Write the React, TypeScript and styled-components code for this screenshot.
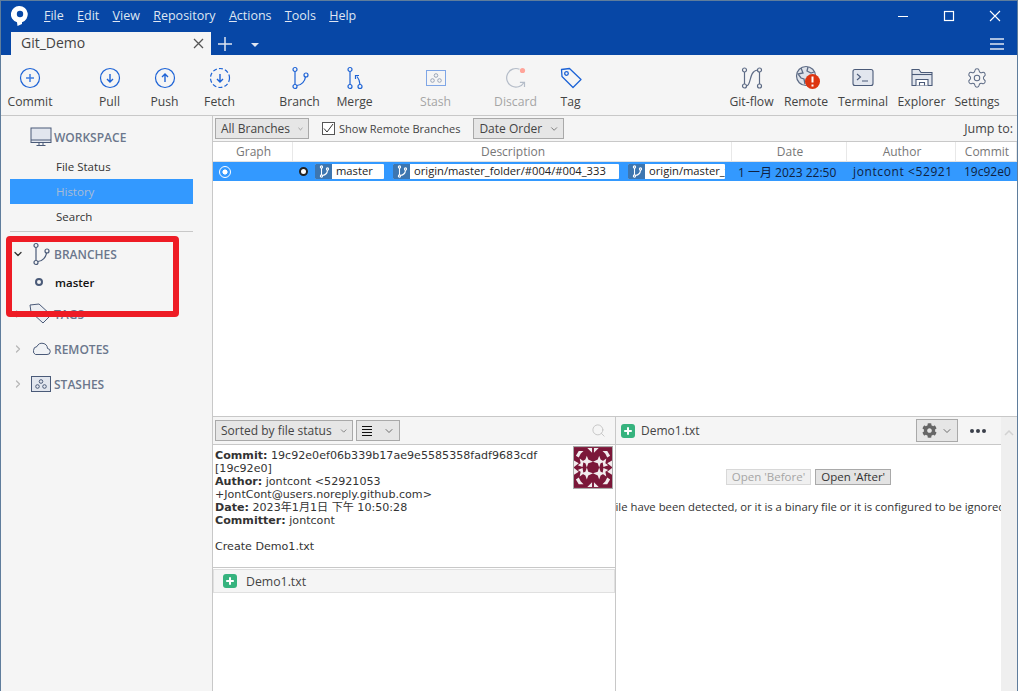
import React from "react";
import styled, { createGlobalStyle } from "styled-components";
import { ChevronDown, ChevronRight, Search, Settings } from "lucide-react";
import { FaCog } from "react-icons/fa";

const UI_FONT = `"Open Sans", "Noto Sans CJK TC", sans-serif`;

const GlobalStyle = createGlobalStyle`
  html, body {
    margin: 0;
    padding: 0;
    overflow: hidden;
    background: #f5f5f5;
  }
  * { box-sizing: border-box; }
`;

const BLUE = "#1d63d6";
const SLATE = "#4a5a78";

const CommitIcon = () => (
  <svg width="22" height="22" viewBox="0 0 22 22" fill="none" stroke={BLUE} strokeWidth="1.2">
    <circle cx="11" cy="11" r="9.5" />
    <path d="M11 7v8M7 11h8" stroke="#3f7de0" strokeWidth="1.5" />
  </svg>
);
const PullIcon = () => (
  <svg width="22" height="22" viewBox="0 0 22 22" fill="none" stroke={BLUE} strokeWidth="1.2">
    <circle cx="11" cy="11" r="9.5" />
    <path d="M11 7v8M8 12l3 3 3-3" strokeWidth="1.4" />
  </svg>
);
const PushIcon = () => (
  <svg width="22" height="22" viewBox="0 0 22 22" fill="none" stroke={BLUE} strokeWidth="1.2">
    <circle cx="11" cy="11" r="9.5" />
    <path d="M11 15V7M8 10l3-3 3 3" strokeWidth="1.4" />
  </svg>
);
const FetchIcon = () => (
  <svg width="22" height="22" viewBox="0 0 22 22" fill="none" stroke={BLUE} strokeWidth="1.2">
    <circle cx="11" cy="11" r="9.5" strokeDasharray="4 2.2" />
    <path d="M11 7v8M8 12l3 3 3-3" strokeWidth="1.4" />
  </svg>
);
const BranchIcon = ({ color = BLUE }: { color?: string }) => (
  <svg width="22" height="24" viewBox="0 0 22 24" fill="none" stroke={color} strokeWidth="1.2">
    <circle cx="6" cy="3.5" r="2" />
    <circle cx="6" cy="20.5" r="2" />
    <circle cx="17" cy="9" r="2" />
    <path d="M6 5.5v13M7.8 19.5c5 -0.5 8.2 -4.5 8.7 -8.6" />
  </svg>
);
const MergeIcon = () => (
  <svg width="22" height="24" viewBox="0 0 22 24" fill="none" stroke={BLUE} strokeWidth="1.2">
    <circle cx="6" cy="3.5" r="2" />
    <circle cx="6" cy="20.5" r="2" />
    <circle cx="16" cy="20.5" r="2" />
    <path d="M6 5.5v13M16 18.5c0 -3 -1 -5.5 -3 -8M11.5 13v-3.5h3.5" />
  </svg>
);
const StashIcon = () => (
  <svg width="22" height="18" viewBox="0 0 22 18" fill="none" stroke="#7fa6e6" strokeWidth="1">
    <rect x="1.5" y="1.5" width="19" height="15" />
    <circle cx="11" cy="6.5" r="1.8" stroke="#9aa5b8" />
    <circle cx="7.5" cy="11.5" r="1.8" stroke="#9aa5b8" />
    <circle cx="14.5" cy="11.5" r="1.8" stroke="#9aa5b8" />
  </svg>
);
const DiscardIcon = () => (
  <svg width="24" height="24" viewBox="0 0 24 24" fill="none" stroke="#b4bcc8" strokeWidth="1.2">
    <path d="M15.5 3.2A9.3 9.3 0 1 0 20 16.5" />
    <path d="M20.5 21v-4.6h-4.6" />
    <circle cx="18.5" cy="4.5" r="2.6" fill="#ffa49a" stroke="none" />
  </svg>
);
const TagIcon = () => (
  <svg width="22" height="22" viewBox="0 0 22 22" fill="none" stroke={BLUE} strokeWidth="1.3">
    <path d="M1.5 2.5L9.5 1.5L21 12.5L13 20.5L2 9.5Z" strokeLinejoin="round" />
    <circle cx="6.5" cy="6.5" r="1.8" />
  </svg>
);
const FlowIcon = () => (
  <svg width="22" height="22" viewBox="0 0 22 22" fill="none" stroke="#5d6b85" strokeWidth="1.2">
    <circle cx="3.5" cy="3" r="2" />
    <circle cx="3.5" cy="19" r="2" />
    <circle cx="18.5" cy="3" r="2" />
    <circle cx="18.5" cy="19" r="2" />
    <path d="M3.5 5v12M18.5 5v12M5.5 19c5 0 2-15 11-16" />
  </svg>
);
const RemoteIcon = () => (
  <svg width="28" height="26" viewBox="-3 0 28 26" fill="none">
    <circle cx="11" cy="11" r="9.5" fill="#dfe3ea" stroke="#5d6b85" strokeWidth="1.2" />
    <path d="M6 3l2 5-5 1 3 4 3 1 1 5M13 2l-1 4 4 2 3-1M15 12l3 2-2 4" stroke="#5d6b85" strokeWidth="1.3" />
    <circle cx="17.5" cy="16.5" r="7.5" fill="#dd3511" />
    <path d="M17.5 11.5v6M17.5 19.5v2" stroke="#fff" strokeWidth="2" />
  </svg>
);
const TerminalIcon = () => (
  <svg width="22" height="20" viewBox="0 0 22 20" fill="none" stroke="#4a5a78" strokeWidth="1.1">
    <rect x="1" y="1.5" width="20" height="16" rx="2" fill="#e2e6ee" />
    <path d="M5 6l3.5 3L5 12M10 13h6" />
  </svg>
);
const ExplorerIcon = () => (
  <svg width="22" height="20" viewBox="0 0 22 20" fill="none" stroke="#4a5a78" strokeWidth="1.1">
    <path d="M1 17.5V1.5h7l2 3h11v13z" fill="#e2e6ee" />
    <path d="M1 6.5h20" />
    <path d="M5 17.5v-6h12v6M8.5 17.5v-3h5v3" fill="#fff" />
  </svg>
);
const MonitorIcon = () => (
  <svg width="22" height="21" viewBox="0 0 22 21" fill="none" stroke={SLATE} strokeWidth="1">
    <rect x="1" y="1" width="20" height="14.5" fill="#e2e6ee" />
    <path d="M1 13h20M9 15.5v2.5M13 15.5v2.5M6.5 18.5h9" />
  </svg>
);
const CloudIcon = () => (
  <svg width="20" height="14" viewBox="0 0 20 14" fill="none" stroke={SLATE} strokeWidth="1">
    <path d="M4.5 12.5h11.5a3 3 0 0 0 .5-6A5.5 5.5 0 0 0 6 4.5a4 4 0 0 0-3.5 4 3.5 3.5 0 0 0 2 4z" fill="#f0f2f5" />
  </svg>
);
const StashBoxIcon = () => (
  <svg width="20" height="17" viewBox="0 0 20 17" fill="none" stroke={SLATE} strokeWidth="1">
    <rect x="0.5" y="0.5" width="19" height="15" fill="#e2e6ee" />
    <circle cx="10" cy="5.5" r="1.8" />
    <circle cx="6.5" cy="10.5" r="1.8" />
    <circle cx="13.5" cy="10.5" r="1.8" />
  </svg>
);
const SideTagIcon = () => (
  <svg width="23" height="22" viewBox="0 0 23 22" fill="none" stroke={SLATE} strokeWidth="1">
    <path d="M1 2l9-1 12 11-8 8L2 9z" fill="#eceef2" />
  </svg>
);
const RefGlyph = () => (
  <svg width="12" height="13" viewBox="0 0 12 13" fill="none" stroke="#fff" strokeWidth="1.1">
    <circle cx="3.5" cy="2" r="1.1" />
    <circle cx="3.5" cy="11" r="1.1" />
    <circle cx="9.5" cy="4" r="1.1" />
    <path d="M3.5 3v7M4.500 10.500c3-.5 4.800-2.500 5-5.400" />
  </svg>
);
const PlusBadge = () => (
  <svg width="14" height="14" viewBox="0 0 14 14">
    <rect width="14" height="14" rx="3" fill="#36b37e" />
    <path d="M7 3.2v7.6M3.2 7h7.6" stroke="#fff" strokeWidth="2" />
  </svg>
);
const ListIcon = () => (
  <svg width="10" height="10" viewBox="0 0 10 10" stroke="#111" strokeWidth="1">
    <path d="M0 .5h10M0 3.5h10M0 6.5h10M0 9.5h10" />
  </svg>
);

// one corner of the avatar, mirrored into the other three
const Quadrant = () => (
  <>
    <path d="M2 8l3-5 5 0-3 3-2 4zM14 0h5v5zM0 13l5 3-5 4z" />
    <path d="M10 14l-4-3 1 5-3 2 5 2z" />
    <path d="M13.500 8l1.500 4 5 2.500-5 1.500-1.500 4.500-1.500-4.500-4-1.500 4-2.500z" />
  </>
);
const Identicon = () => (
  <svg width="38" height="41" viewBox="0 0 40 43" style={{ display: "block" }}>
    <rect width="40" height="43" fill="#7b1739" />
    <g fill="#f2ecee">
      <g transform="translate(0 1)"><Quadrant /></g>
      <g transform="translate(40 1) scale(-1 1)"><Quadrant /></g>
      <g transform="translate(0 42) scale(1 -1)"><Quadrant /></g>
      <g transform="translate(40 42) scale(-1 -1)"><Quadrant /></g>
    </g>
  </svg>
);

const Chevron = () => <ChevronDown size={12} strokeWidth={1.5} color="#444" />;

export default function App() {
  return (
    <Window>
      <GlobalStyle />
      <TitleBar>
        <MenuRow>
          <Logo>
            <svg width="17" height="20" viewBox="0 0 17 20">
              <path d="M8.500 0a8.300 8.300 0 0 1 2.500 16.200V18l-4.500 2L6 16.300A8.300 8.300 0 0 1 8.500 0z" fill="#fff" />
              <circle cx="9" cy="8" r="3.200" fill="#0747a6" />
            </svg>
          </Logo>
          <Menu>
            {[["F", "ile"], ["E", "dit"], ["V", "iew"], ["R", "epository"], ["A", "ctions"], ["T", "ools"], ["H", "elp"]].map(([k, rest]) => (
              <MenuItem key={k}>
                <u>{k}</u>
                {rest}
              </MenuItem>
            ))}
          </Menu>
          <WinControls>
            <svg width="12" height="12" viewBox="0 0 12 12" stroke="#fff" strokeWidth="1">
              <path d="M1 6.500h10" />
            </svg>
            <svg width="12" height="12" viewBox="0 0 12 12" stroke="#fff" strokeWidth="1.200" fill="none">
              <rect x="1.500" y="1.500" width="9" height="9" />
            </svg>
            <svg width="12" height="12" viewBox="0 0 12 12" stroke="#fff" strokeWidth="1.100">
              <path d="M1 1l10 10M11 1L1 11" />
            </svg>
          </WinControls>
        </MenuRow>
        <TabRow>
          <Tab>
            <TabName>Git_Demo</TabName>
            <svg width="11" height="11" viewBox="0 0 11 11" stroke="#555" strokeWidth="1.300">
              <path d="M1 1l9 9M10 1l-9 9" />
            </svg>
          </Tab>
          <NewTab>
            <svg width="14" height="14" viewBox="0 0 14 14" stroke="#dfe6f2" strokeWidth="1.500">
              <path d="M7 0v14M0 7h14" />
            </svg>
          </NewTab>
          <Caret />
          <Burger>
            <i />
            <i />
            <i />
          </Burger>
        </TabRow>
      </TitleBar>

      <Toolbar>
        <Tool $w={58}><IconSlot><CommitIcon /></IconSlot>Commit</Tool>
        <Tool $off={23}><IconSlot><PullIcon /></IconSlot>Pull</Tool>
        <Tool><IconSlot><PushIcon /></IconSlot>Push</Tool>
        <Tool><IconSlot><FetchIcon /></IconSlot>Fetch</Tool>
        <Tool $off={25}><IconSlot><BranchIcon /></IconSlot>Branch</Tool>
        <Tool><IconSlot><MergeIcon /></IconSlot>Merge</Tool>
        <Tool $off={26} $disabled><IconSlot><StashIcon /></IconSlot>Stash</Tool>
        <Tool $off={25} $disabled><IconSlot><DiscardIcon /></IconSlot>Discard</Tool>
        <Tool><IconSlot><TagIcon /></IconSlot>Tag</Tool>
        <ToolSpacer />
        <Tool $w={57}><IconSlot><FlowIcon /></IconSlot>Git-flow</Tool>
        <Tool $w={52}><IconSlot><RemoteIcon /></IconSlot>Remote</Tool>
        <Tool $w={62}><IconSlot><TerminalIcon /></IconSlot>Terminal</Tool>
        <Tool $w={55}><IconSlot><ExplorerIcon /></IconSlot>Explorer</Tool>
        <Tool $w={56}><IconSlot><Settings size={22} strokeWidth={1.1} color="#5d6b85" /></IconSlot>Settings</Tool>
      </Toolbar>

      <Body>
        <Sidebar>
          <WorkspaceHead>
            <MonitorIcon />
            <SectionLabel>WORKSPACE</SectionLabel>
          </WorkspaceHead>
          <NavItem>File Status</NavItem>
          <NavItem $active>History</NavItem>
          <NavItem>Search</NavItem>
          <Divider />
          <SectionHead $top={10}>
            <ChevronDown size={12} strokeWidth={2.6} color="#333" />
            <SectionIcon><BranchIcon color={SLATE} /></SectionIcon>
            <SectionLabel>BRANCHES</SectionLabel>
          </SectionHead>
          <BranchRow>
            <BranchDot />
            master
          </BranchRow>
          <SectionHead $top={8}>
            <ChevronRight size={12} strokeWidth={2.4} color="#b5b5b5" />
            <SectionIcon><SideTagIcon /></SectionIcon>
            <SectionLabel>TAGS</SectionLabel>
          </SectionHead>
          <SectionHead $top={11}>
            <ChevronRight size={12} strokeWidth={2.4} color="#b5b5b5" />
            <SectionIcon><CloudIcon /></SectionIcon>
            <SectionLabel>REMOTES</SectionLabel>
          </SectionHead>
          <SectionHead $top={11}>
            <ChevronRight size={12} strokeWidth={2.4} color="#b5b5b5" />
            <SectionIcon><StashBoxIcon /></SectionIcon>
            <SectionLabel>STASHES</SectionLabel>
          </SectionHead>
          <Highlight />
        </Sidebar>

        <Main>
          <FilterBar>
            <Select $w={94}>All Branches<Chevron /></Select>
            <CheckLabel>
              <CheckBox>
                <svg width="11" height="11" viewBox="0 0 11 11" fill="none" stroke="#333" strokeWidth="1">
                  <path d="M1 5.500l3 3.500 6-8" />
                </svg>
              </CheckBox>
              Show Remote Branches
            </CheckLabel>
            <Select $w={91}>Date Order<Chevron /></Select>
            <JumpTo>Jump to:</JumpTo>
          </FilterBar>
          <Columns>
            <span>Graph</span>
            <span>Description</span>
            <span>Date</span>
            <span>Author</span>
            <span>Commit</span>
          </Columns>
          <LogArea>
            <LogRow>
              <GraphCell><GraphNode /></GraphCell>
              <DescCell>
                <HeadDot />
                <Ref $w={69}><RefIcon><RefGlyph /></RefIcon><RefName>master</RefName></Ref>
                <Ref $w={226}><RefIcon><RefGlyph /></RefIcon><RefName>origin/master_folder/#004/#004_333</RefName></Ref>
                <Ref $w={97}><RefIcon><RefGlyph /></RefIcon><RefName>origin/master_f</RefName></Ref>
              </DescCell>
              <LogCell>1 一月 2023 22:50</LogCell>
              <LogCell $spread>jontcont &lt;52921</LogCell>
              <LogCell $pad={8}>19c92e0</LogCell>
            </LogRow>
          </LogArea>
          <Bottom>
            <LeftPane>
              <PaneBar>
                <Select $w={138}>Sorted by file status<Chevron /></Select>
                <Select $w={44}><ListIcon /><Chevron /></Select>
                <SearchSlot><Search size={15} strokeWidth={1.5} color="#c4c4c4" /></SearchSlot>
              </PaneBar>
              <Details>
                <Avatar><Identicon /></Avatar>
                <b>Commit:</b> 19c92e0ef06b339b17ae9e5585358fadf9683cdf<br />
                [19c92e0]<br />
                <b>Author:</b> jontcont &lt;52921053<br />
                +JontCont@users.noreply.github.com&gt;<br />
                <b>Date:</b> 2023年1月1日 下午 10:50:28<br />
                <b>Committer:</b> jontcont<br />
                <br />
                Create Demo1.txt
              </Details>
              <FileList>
                <FileRow>
                  <PlusBadge />
                  Demo1.txt
                </FileRow>
              </FileList>
            </LeftPane>
            <RightPane>
              <DiffContent>
                <DiffBar>
                  <PlusBadge />
                  <DiffName>Demo1.txt</DiffName>
                  <GearButton>
                    <FaCog size={15} color="#666" />
                    <Chevron />
                  </GearButton>
                  <Dots>
                    <i />
                    <i />
                    <i />
                  </Dots>
                </DiffBar>
                <DiffBody>
                  <OpenButtons>
                    <OpenButton $disabled>Open 'Before'</OpenButton>
                    <OpenButton>Open 'After'</OpenButton>
                  </OpenButtons>
                  <NoDiff>
                    <span>file have been detected, or it is a binary file or it is configured to be ignored</span>
                  </NoDiff>
                </DiffBody>
              </DiffContent>
              <ScrollTrack>
                <svg width="10" height="6" viewBox="0 0 10 6" fill="none" stroke="#d2d2d2" strokeWidth="1.500">
                  <path d="M1 5l4-4 4 4" />
                </svg>
              </ScrollTrack>
            </RightPane>
          </Bottom>
        </Main>
      </Body>
    </Window>
  );
}

const Window = styled.div`
  width: 1018px;
  height: 691px;
  display: flex;
  flex-direction: column;
  border-top: 1px solid #5f7d9c;
  border-left: 1px solid #5f7d9c;
  border-right: 1px solid #5f7d9c;
  background: #f5f5f5;
  color: #333;
  font: 12px ${UI_FONT};
  overflow: hidden;
  position: relative;
`;

const TitleBar = styled.div`
  height: 54px;
  background: #0747a6;
  flex: none;
`;

const MenuRow = styled.div`
  height: 29px;
  margin-bottom: 2px;
  display: flex;
  align-items: center;
`;

const Logo = styled.div`
  width: 43px;
  padding-left: 10px;
  display: flex;
`;

const Menu = styled.div`
  display: flex;
  gap: 13.300px;
  color: #dfe6f2;
  font-size: 12.500px;
`;

const MenuItem = styled.span`
  white-space: nowrap;
`;

const WinControls = styled.div`
  margin-left: auto;
  display: flex;
  gap: 34px;
  padding-right: 16px;
`;

const TabRow = styled.div`
  height: 23px;
  display: flex;
  align-items: center;
  padding-left: 10px;
`;

const Tab = styled.div`
  width: 200px;
  height: 23px;
  background: #f5f5f5;
  display: flex;
  align-items: center;
  justify-content: space-between;
  padding: 0 7px 0 10px;
`;

const TabName = styled.span`
  font-size: 14px;
  color: #444;
  margin-top: -2px;
`;

const NewTab = styled.div`
  margin-left: 7px;
  display: flex;
`;

const Caret = styled.div`
  margin-left: 19px;
  margin-top: 3px;
  border-left: 4px solid transparent;
  border-right: 4px solid transparent;
  border-top: 4px solid #dfe6f2;
`;

const Burger = styled.div`
  margin-left: auto;
  margin-right: 13px;
  width: 14px;
  display: flex;
  flex-direction: column;
  gap: 3px;
  i {
    display: block;
    height: 2px;
    background: #a9bfe0;
  }
`;

const Toolbar = styled.div`
  height: 61px;
  flex: none;
  display: flex;
  align-items: flex-start;
  padding-top: 10px;
  padding-right: 12px;
  border-bottom: 1px solid #c8c8c8;
`;

const Tool = styled.div<{ $w?: number; $off?: number; $disabled?: boolean }>`
  width: ${(p) => p.$w ?? 55}px;
  margin-left: ${(p) => p.$off ?? 0}px;
  flex: none;
  display: flex;
  flex-direction: column;
  align-items: center;
  font-size: 12.200px;
  white-space: nowrap;
  color: ${(p) => (p.$disabled ? "#a5a5a5" : "#444")};
`;

const ToolSpacer = styled.div`
  flex: 1;
`;

const IconSlot = styled.div`
  height: 26px;
  display: flex;
  align-items: center;
  justify-content: center;
  margin-bottom: 2px;
`;

const Body = styled.div`
  flex: 1;
  display: flex;
  min-height: 0;
`;

const Sidebar = styled.div`
  width: 212px;
  flex: none;
  padding: 10px 19px 0 9px;
  border-right: 1px solid #c8c8c8;
  position: relative;
`;

const WorkspaceHead = styled.div`
  height: 22px;
  display: flex;
  align-items: center;
  padding-left: 20px;
  margin-bottom: 6px;
`;

const SectionHead = styled.div<{ $top: number }>`
  margin-top: ${(p) => p.$top}px;
  height: 24px;
  padding-left: 2px;
  display: flex;
  align-items: center;
`;

const SectionIcon = styled.span`
  width: 23px;
  margin-left: 5px;
  flex: none;
  display: flex;
  align-items: center;
  justify-content: center;
`;

const SectionLabel = styled.span`
  font-size: 12px;
  font-weight: 600;
  color: #6b778c;
  margin-left: 2px;
`;

const NavItem = styled.div<{ $active?: boolean }>`
  height: 25px;
  line-height: 25px;
  padding-left: 46px;
  font-size: 11.500px;
  background: ${(p) => (p.$active ? "#3399ff" : "transparent")};
  color: ${(p) => (p.$active ? "#a9bcd6" : "#333")};
`;

const Divider = styled.div`
  height: 1px;
  margin-top: 2px;
  background: #c8c8c8;
`;

const BranchRow = styled.div`
  height: 24px;
  margin-top: 4px;
  display: flex;
  align-items: center;
  gap: 12px;
  padding-left: 25px;
  font-size: 11.500px;
  font-weight: 600;
  color: #111;
`;

const BranchDot = styled.span`
  width: 8px;
  height: 8px;
  border-radius: 50%;
  border: 2px solid #4a5a78;
`;

const Highlight = styled.div`
  position: absolute;
  left: 5px;
  top: 120px;
  width: 173px;
  height: 81px;
  border: 6px solid #ee1c25;
  border-radius: 4px;
  pointer-events: none;
`;

const Main = styled.div`
  flex: 1;
  min-width: 0;
  display: flex;
  flex-direction: column;
`;

const FilterBar = styled.div`
  height: 25px;
  flex: none;
  display: flex;
  align-items: center;
  padding-left: 2px;
`;

const Select = styled.div<{ $w?: number }>`
  height: 21px;
  ${(p) => p.$w && `width: ${p.$w}px;`}
  display: flex;
  align-items: center;
  justify-content: space-between;
  gap: 7px;
  padding: 0 4px 0 5px;
  background: #e6e6e6;
  border: 1px solid #a9a9a9;
  font-size: 12px;
  color: #444;
  white-space: nowrap;
`;

const CheckLabel = styled.div`
  display: flex;
  align-items: center;
  gap: 4px;
  margin: 0 13px 0 13px;
  font-size: 11px;
  color: #444;
`;

const CheckBox = styled.span`
  width: 13px;
  height: 13px;
  background: #fff;
  border: 1px solid #555;
  display: flex;
  align-items: center;
  justify-content: center;
`;

const JumpTo = styled.span`
  margin-left: auto;
  padding-right: 4px;
  font-size: 12.500px;
  color: #444;
`;

const Columns = styled.div`
  height: 21px;
  flex: none;
  display: grid;
  grid-template-columns: 80px 439px 115px 109px 1fr;
  background: #fff;
  border-top: 1px solid #c8c8c8;
  border-bottom: 1px solid #e2e2e2;
  span {
    text-align: center;
    line-height: 19px;
    padding-left: 2px;
    color: #777;
    font-size: 12px;
    border-right: 1px solid #e8e8e8;
  }
`;

const LogArea = styled.div`
  flex: 1;
  background: #fff;
  min-height: 0;
`;

const LogRow = styled.div`
  height: 19px;
  display: grid;
  grid-template-columns: 80px 439px 115px 109px 1fr;
  background: #3399ff;
  align-items: center;
`;

const GraphCell = styled.div`
  padding-left: 6px;
  display: flex;
`;

const GraphNode = styled.span`
  width: 12px;
  height: 12px;
  border-radius: 50%;
  border: 1.500px solid #fff;
  background: radial-gradient(circle, #fff 0 2.300px, #3399ff 2.800px);
`;

const DescCell = styled.div`
  display: flex;
  align-items: center;
  overflow: hidden;
  padding-right: 5px;
  gap: 9px;
  padding-left: 6px;
`;

const HeadDot = styled.span`
  width: 9px;
  height: 9px;
  flex: none;
  border-radius: 50%;
  background: #fff;
  border: 2px solid #222;
  margin-right: -2px;
`;

const Ref = styled.div<{ $w: number }>`
  width: ${(p) => p.$w}px;
  height: 15px;
  flex: none;
  display: flex;
  overflow: hidden;
  background: #fff;
  border-radius: 1px;
`;

const RefIcon = styled.span`
  width: 17px;
  flex: none;
  background: #3d76b0;
  display: flex;
  align-items: center;
  justify-content: center;
`;

const RefName = styled.span`
  padding-left: 4px;
  font-size: 11.200px;
  line-height: 14px;
  color: #222;
  white-space: nowrap;
`;

const LogCell = styled.div<{ $spread?: boolean; $pad?: number }>`
  padding-left: ${(p) => p.$pad ?? 6}px;
  font-size: 12px;
  letter-spacing: ${(p) => (p.$spread ? "0.6px" : "0")};
  color: #0f2140;
  white-space: nowrap;
  overflow: hidden;
`;

const Bottom = styled.div`
  height: 275px;
  flex: none;
  display: flex;
  border-top: 1px solid #c8c8c8;
  background: #fff;
`;

const LeftPane = styled.div`
  width: 403px;
  flex: none;
  display: flex;
  flex-direction: column;
  border-right: 1px solid #c8c8c8;
`;

const PaneBar = styled.div`
  height: 28px;
  flex: none;
  display: flex;
  align-items: center;
  gap: 3px;
  padding-left: 2px;
  background: #f5f5f5;
  border-bottom: 1px solid #c8c8c8;
`;

const SearchSlot = styled.div`
  margin-left: auto;
  padding-right: 9px;
  display: flex;
`;

const Details = styled.div`
  height: 123px;
  flex: none;
  padding: 4px 2px 0 2px;
  font: 11.100px/13px "DejaVu Sans", "Noto Sans CJK TC", sans-serif;
  color: #333;
  border-bottom: 1px solid #c8c8c8;
  b {
    font-weight: 700;
  }
`;

const Avatar = styled.div`
  float: right;
  margin: -2px 1px 0 4px;
  outline: 1px solid #aaa;
`;

const FileList = styled.div`
  flex: 1;
  padding: 1px 0 0;
`;

const FileRow = styled.div`
  height: 24px;
  display: flex;
  align-items: center;
  gap: 9px;
  padding-left: 9px;
  background: #f5f5f5;
  border: 1px solid #e0e0e0;
  font-size: 12.300px;
  color: #444;
`;

const RightPane = styled.div`
  flex: 1;
  min-width: 0;
  display: flex;
`;

const DiffContent = styled.div`
  flex: 1;
  min-width: 0;
  display: flex;
  flex-direction: column;
`;

const DiffBar = styled.div`
  height: 28px;
  flex: none;
  display: flex;
  align-items: center;
  padding: 0 15px 0 5px;
  background: #f5f5f5;
  border-bottom: 1px solid #c8c8c8;
`;

const DiffName = styled.span`
  margin-left: 6px;
  font-size: 12px;
  color: #444;
`;

const GearButton = styled.div`
  margin-left: auto;
  width: 42px;
  height: 23px;
  display: flex;
  align-items: center;
  justify-content: space-between;
  padding: 0 4px 0 5px;
  background: #e6e6e6;
  border: 1px solid #a9a9a9;
`;

const Dots = styled.div`
  margin-left: 12px;
  display: flex;
  gap: 2px;
  i {
    width: 4px;
    height: 4px;
    border-radius: 50%;
    background: #3a3f4a;
  }
`;

const DiffBody = styled.div`
  flex: 1;
  min-height: 0;
  display: flex;
  flex-direction: column;
  align-items: center;
  padding-top: 24px;
`;

const OpenButtons = styled.div`
  display: flex;
  gap: 4px;
`;

const OpenButton = styled.div<{ $disabled?: boolean }>`
  height: 16px;
  line-height: 14px;
  padding: 0 5px;
  font-size: 11.500px;
  background: ${(p) => (p.$disabled ? "#f0f0f0" : "#e3e3e3")};
  border: 1px solid ${(p) => (p.$disabled ? "#d8d8d8" : "#a9a9a9")};
  color: ${(p) => (p.$disabled ? "#a5a5a5" : "#333")};
`;

const NoDiff = styled.div`
  width: 100%;
  margin-top: 14px;
  display: flex;
  justify-content: center;
  overflow: hidden;
  font-size: 11.300px;
  color: #333;
  span {
    flex: none;
    white-space: nowrap;
  }
`;

const ScrollTrack = styled.div`
  width: 16px;
  flex: none;
  background: #efefef;
  display: flex;
  justify-content: center;
  padding-top: 13px;
  align-items: flex-start;
`;
